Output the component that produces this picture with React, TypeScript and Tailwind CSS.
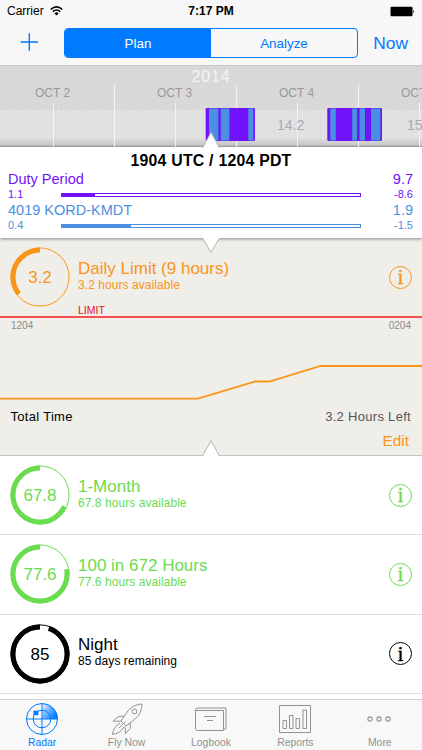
import React from "react";

const BLUE = "#007aff";
const PURPLE = "#7013fb";
const SKY = "#4a90e2";
const ORANGE = "#fa951b";
const GREEN = "#6bdc4f";

type Stripe = [number, number];

const duties: { from: number; to: number; flights: Stripe[] }[] = [
  { from: 205.7, to: 255, flights: [[209, 218.4], [220.7, 229.4], [248.3, 253.4]] },
  { from: 327.3, to: 382, flights: [[330.3, 335.8], [352.2, 357], [359.6, 365], [371, 380.4]] },
];

function Ring({ value, part, color }: { value: string; part: number; color: string }) {
  const r = 27;
  const len = 2 * Math.PI * r;
  return (
    <div className="relative size-[60px] shrink-0">
      <svg viewBox="0 0 60 60" className="absolute inset-0 size-full" fill="none" stroke={color}>
        <circle cx="30" cy="30" r="29.1" strokeWidth="1" />
        <circle
          cx="30"
          cy="30"
          r={r}
          strokeWidth="5"
          strokeDasharray={`${len * part} ${len}`}
          transform="translate(60 0) scale(-1 1) rotate(-90 30 30)"
        />
      </svg>
      <div className="flex size-full items-center justify-center pt-px text-[17px]">{value}</div>
    </div>
  );
}

function Info() {
  return (
    <div className="flex size-[23px] shrink-0 items-center justify-center rounded-full border-[1.2px] border-current font-['Liberation_Serif',serif] text-[20px] leading-[20px] [-webkit-text-stroke:0.5px]">
      i
    </div>
  );
}

function LimitHead({ value, part, color, title, note }: { value: string; part: number; color: string; title: string; note: string }) {
  return (
    <div className="flex items-center pl-[10px] pr-[10px]" style={{ color }}>
      <Ring value={value} part={part} color={color} />
      <div className="ml-2 flex-1 pb-[3px]">
        <div className="text-[17px] leading-[19px]">{title}</div>
        <div className="text-[12px] leading-[15px] tracking-[0.06px]">{note}</div>
      </div>
      <Info />
    </div>
  );
}

function Pointer({ down = false, className }: { down?: boolean; className: string }) {
  return (
    <svg width="20" height="17" viewBox="0 0 20 17" className={`absolute left-[201px] z-10 ${className}`}>
      <path d={down ? "M1.5 0 L10 14.5 L18.5 0" : "M1.5 17 L10 1.5 L18.5 17"} fill="#fff" stroke="#b4b4b4" strokeWidth="1" />
    </svg>
  );
}

function Period({ name, total, done, left, part, color }: { name: string; total: string; done: string; left: string; part: string; color: string }) {
  return (
    <div className="h-[30.5px] pl-[8px] pr-[9px]" style={{ color }}>
      <div className="flex justify-between text-[14.5px] leading-[17px]">
        <span>{name}</span>
        <span>{total}</span>
      </div>
      <div className="flex items-center text-[11px] leading-[13px]">
        <span className="w-[53px]">{done}</span>
        <div className="mt-px h-1 w-[300px] border border-current">
          <div className="h-full bg-current" style={{ width: part }} />
        </div>
        <span className="flex-1 text-right">{left}</span>
      </div>
    </div>
  );
}

function Timeline() {
  return (
    <div className="relative h-[82px] overflow-hidden border-t border-[#c9c9c9] bg-[#d8d8d8]">
      <svg width="422" height="82" viewBox="0 65 422 82" className="absolute left-0 -top-px">
        <defs>
          <linearGradient id="fade" x1="0" y1="0" x2="0" y2="1">
            <stop offset="0" stopColor="#d8d8d8" />
            <stop offset="0.7" stopColor="#c9c9c9" />
            <stop offset="1" stopColor="#999" />
          </linearGradient>
        </defs>
        <rect x="0" y="110" width="422" height="29" fill="#e0e0e0" />
        <rect x="0" y="139" width="422" height="8" fill="url(#fade)" />
        {Array.from({ length: 84 }, (_, i) => (
          <path key={i} d={`M${2.6 + i * 5.083} 105V142`} stroke="#fff" strokeOpacity=".13" />
        ))}
        {[53.5, 175.5, 297.5, 419.5].map((x) => (
          <path key={x} d={`M${x} 103V147`} stroke="#f3f3f3" />
        ))}
        {[114.5, 236.5, 358.5].map((x) => (
          <path key={x} d={`M${x} 85V147`} stroke="#f3f3f3" strokeWidth="1.2" />
        ))}
        {duties.map((d) => (
          <g key={d.from}>
            <rect x={d.from} y="108" width={d.to - d.from} height="33" rx="1.2" fill={PURPLE} />
            {d.flights.map(([a, b]) => (
              <rect key={a} x={a} y="108.5" width={b - a} height="32" fill={SKY} />
            ))}
          </g>
        ))}
      </svg>
      <div className="relative h-[19px] pt-[2px] text-center text-[16px] leading-[18px] tracking-[0.9px] text-[#f4f4f4]">2014</div>
      <div className="relative -ml-[8.5px] flex w-[488px] pt-px text-center text-[12px] leading-[14px] text-[#999]">
        {["OCT 2", "OCT 3", "OCT 4", "OCT 5"].map((d) => (
          <span key={d} className="w-[122px]">{d}</span>
        ))}
      </div>
      <div className="relative flex pl-[277px] pt-[16px] text-[14px] leading-[18px] text-[#aaa]">
        <span className="w-[130px] shrink-0">14.2</span>
        <span>15.1</span>
      </div>
    </div>
  );
}

function RadarIcon() {
  return (
    <svg width="34" height="34" viewBox="0 0 34 34" fill="none" stroke={BLUE}>
      <defs>
        <linearGradient id="sweep" x1="0" y1="0.2" x2="0.9" y2="0.8">
          <stop offset="0" stopColor={BLUE} stopOpacity=".1" />
          <stop offset="0.45" stopColor={BLUE} stopOpacity=".55" />
          <stop offset="1" stopColor={BLUE} />
        </linearGradient>
      </defs>
      <path d="M17 17V1.2A15.8 15.8 0 0 1 32.8 17Z" fill="url(#sweep)" stroke="none" />
      <circle cx="17" cy="17" r="15.5" />
      <circle cx="17" cy="17" r="8.8" />
      <path d="M17 1.5V32.5M1.5 17H32.5" />
      <path d="M8.5 8.7H13.4V13.2H8.5Z" fill={BLUE} stroke="none" />
    </svg>
  );
}

function RocketIcon() {
  return (
    <svg width="34" height="34" viewBox="0 0 34 34" fill="none" stroke="#929292" strokeLinejoin="round">
      <path d="M32 2C25.5 2.3 20.5 5.5 17 10L11 19L16 24L24.5 17.5C29.5 13.5 31.8 8.5 32 2Z" />
      <circle cx="24.5" cy="9.5" r="2.4" />
      <path d="M14.2 14.2L8.5 14.5L3 19.2L10.8 19.2M20.2 20.8L20.3 26.2L15.4 31.8L15.2 24.6" />
      <path d="M10.2 21L6.5 23.5C4.2 25.8 3.3 28.5 2.3 32.3C6.6 31.8 9.3 30.6 11.3 28.5L14 24.8M15.5 19.5L9 26" />
    </svg>
  );
}

function LogbookIcon() {
  return (
    <svg width="34" height="34" viewBox="0 0 34 34" fill="none" stroke="#929292">
      <path d="M1.5 8.5H29.5V28.5H3.5Q1.5 28.5 1.5 26.5V8.5Q1.5 6 3.8 6H32V27H29.5" />
      <path d="M10 14.5H22M13 18.5H19" strokeWidth="1.2" />
    </svg>
  );
}

function ReportsIcon() {
  return (
    <svg width="34" height="34" viewBox="0 0 34 34" fill="none" stroke="#929292">
      <path d="M1.5 3.5H32.5V30.5H1.5Z" />
      <path d="M5 18.5H8.5V26.5H5ZM11.5 13.5H15V26.5H11.5ZM18 16.5H21.5V26.5H18ZM25 8H28.5V26.5H25Z" />
    </svg>
  );
}

function MoreIcon() {
  return (
    <svg width="34" height="34" viewBox="0 0 34 34" fill="none" stroke="#929292" strokeWidth="1.1">
      <circle cx="7" cy="17" r="2.1" />
      <circle cx="16" cy="17" r="2.1" />
      <circle cx="25" cy="17" r="2.1" />
    </svg>
  );
}

const tabs = [
  { label: "Radar", icon: <RadarIcon />, active: true },
  { label: "Fly Now", icon: <RocketIcon /> },
  { label: "Logbook", icon: <LogbookIcon /> },
  { label: "Reports", icon: <ReportsIcon /> },
  { label: "More", icon: <MoreIcon /> },
];

const limits = [
  { value: "67.8", part: 0.678, color: GREEN, title: "1-Month", note: "67.8 hours available" },
  { value: "77.6", part: 0.776, color: GREEN, title: "100 in 672 Hours", note: "77.6 hours available" },
  { value: "85", part: 0.944, color: "#000", title: "Night", note: "85 days remaining" },
];

export default function App() {
  return (
    <div className="flex h-[750px] w-[422px] flex-col overflow-hidden bg-white font-['Liberation_Sans',Arial,sans-serif]">
      <header className="h-[65px] bg-[#f7f7f7]">
        <div className="grid h-[22px] grid-cols-3 items-center pl-[7px] pr-[7px] text-[12px] text-black">
          <div className="flex items-center gap-[6px]">
            <span>Carrier</span>
            <svg width="13" height="10" viewBox="0 0 13 10" fill="none" stroke="#000" strokeWidth="1.6">
              <path d="M.7 3.5Q6.5 -1.7 12.3 3.5M2.8 5.7Q6.5 2.3 10.2 5.7" />
              <path d="M4.3 7.3Q6.5 5.3 8.7 7.3L6.5 9.6Z" fill="#000" stroke="none" />
            </svg>
          </div>
          <div className="text-center font-bold">7:17 PM</div>
          <svg width="26" height="11" viewBox="0 0 26 11" className="justify-self-end">
            <rect x="1.5" y="0.7" width="22" height="9.6" rx="1.2" />
            <path d="M24.2 3.8Q26 5.5 24.2 7.2Z" />
          </svg>
        </div>
        <div className="flex h-[43px] items-start pl-[20px] pr-[14px] pt-[6px]">
          <svg width="18" height="18" viewBox="0 0 18 18" className="mt-[5px]" stroke={BLUE} strokeWidth="1.4">
            <path d="M9.3 .3V17.7M.6 9H18" />
          </svg>
          <div className="ml-[26px] flex h-[30px] w-[294px] overflow-hidden rounded-[4px] border border-[#007aff] text-[13.4px] leading-[29px]">
            <div className="flex-1 bg-[#007aff] text-center text-white">Plan</div>
            <div className="flex-1 text-center text-[#007aff]">Analyze</div>
          </div>
          <div className="flex-1 text-right text-[17.4px] leading-[31px] text-[#007aff]">Now</div>
        </div>
      </header>

      <Timeline />

      <section className="relative z-10 h-[91px] bg-white pt-[4px] shadow-[0_1px_3px_#888]">
        <Pointer className="-top-[16px]" />
        <div className="text-center text-[15.8px] font-bold leading-[20px] tracking-[0.25px] text-black">1904 UTC / 1204 PDT</div>
        <Period name="Duty Period" total="9.7" done="1.1" left="-8.6" part="11.2%" color={PURPLE} />
        <Period name="4019 KORD-KMDT" total="1.9" done="0.4" left="-1.5" part="23%" color={SKY} />
        <Pointer down className="top-[91px]" />
      </section>

      <section className="relative h-[217px] bg-[#efeee9] pt-[9px]">
        <LimitHead value="3.2" part={0.356} color={ORANGE} title="Daily Limit (9 hours)" note="3.2 hours available" />
        <div className="flex h-[9px] items-end pl-[78px] text-[10.5px] leading-[12px] text-[#e0161f]">LIMIT</div>
        <div className="h-[2px] bg-[#f4504d]" />
        <div className="flex justify-between pl-[11px] pr-[11px] pt-[2px] text-[10px] leading-[12px] text-[#8c8c8a]">
          <span>1204</span>
          <span>0204</span>
        </div>
        <svg width="422" height="74" viewBox="0 332 422 74" fill="none" stroke={ORANGE} strokeWidth="1.8">
          <path d="M0 398.7H198L255.5 381.5H269.5L320.5 366H422" />
        </svg>
        <div className="flex justify-between pl-[10.5px] pr-[11px] pt-[3px] text-[13px] leading-[16px] tracking-[0.3px] text-black">
          <span>Total Time</span>
          <span className="text-[#555]">3.2 Hours Left</span>
        </div>
        <div className="pr-[13px] pt-[6px] text-right text-[15.4px] leading-[20px]" style={{ color: ORANGE }}>Edit</div>
        <Pointer className="top-[201px]" />
      </section>

      <main className="h-[244px] border-t border-[#c2c2c2] bg-white">
        {limits.map((l) => (
          <div key={l.title} className="h-[79.4px] border-b border-[#dedede] pt-[9px]">
            <LimitHead {...l} />
          </div>
        ))}
      </main>

      <nav className="grid h-[51px] grid-cols-5 border-t border-[#cfcfcf] bg-[#f8f8f8] text-[10.4px] leading-[12px]">
        {tabs.map((t) => (
          <div key={t.label} className={`flex flex-col items-center gap-px pt-[2px] ${t.active ? "text-[#007aff]" : "text-[#929292]"}`}>
            {t.icon}
            <span>{t.label}</span>
          </div>
        ))}
      </nav>
    </div>
  );
}
